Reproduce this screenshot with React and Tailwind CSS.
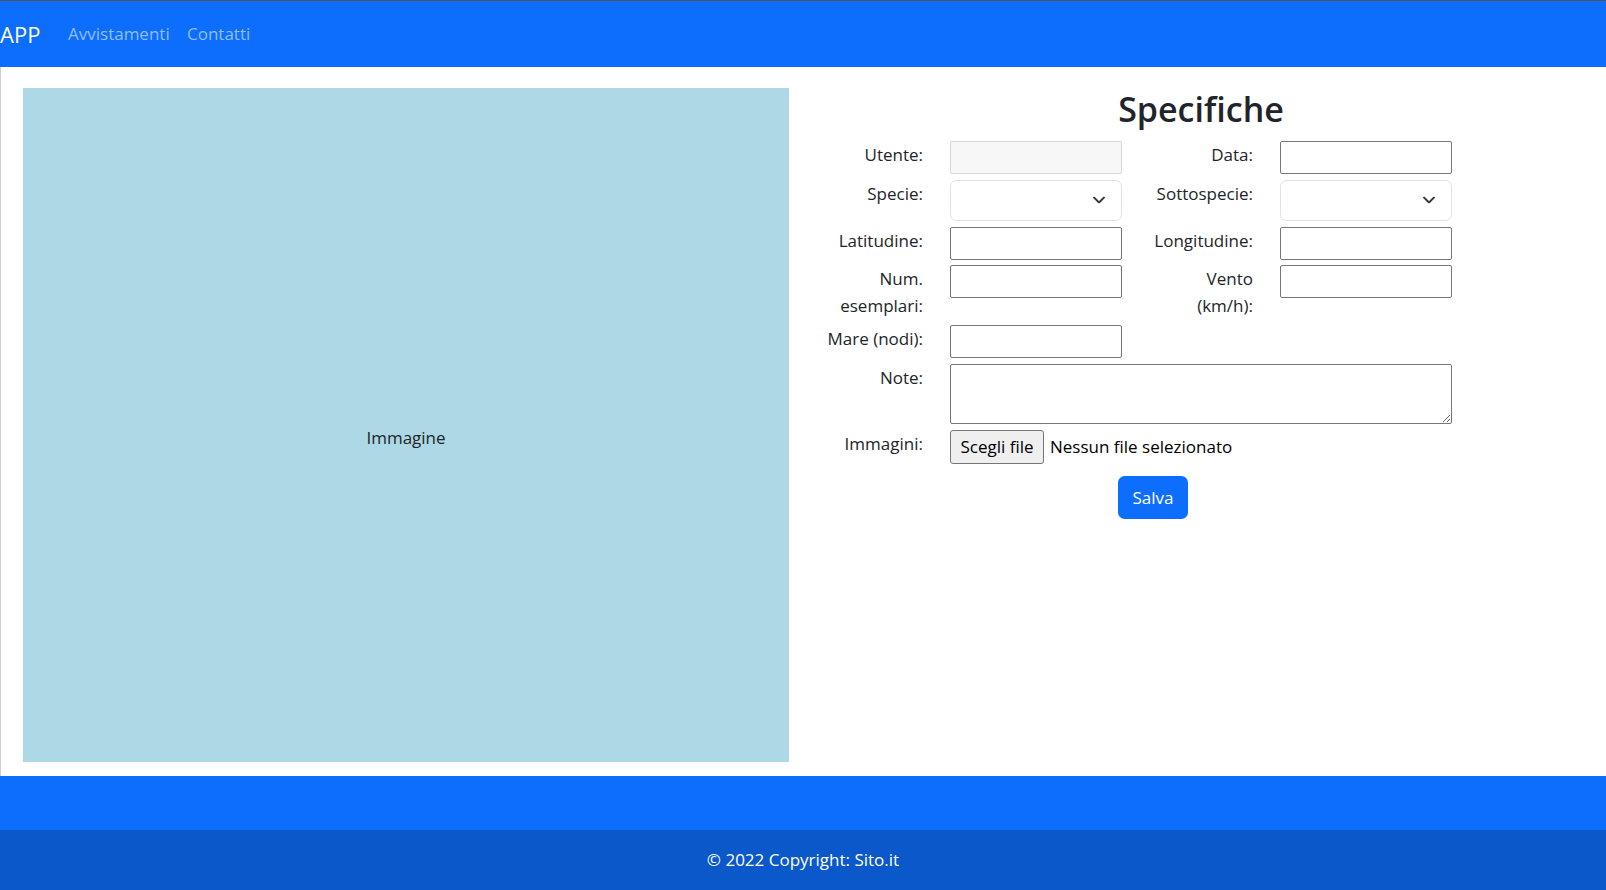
import React from 'react';

const Chevron = () => (
  <svg className="absolute right-[17px] top-1/2 -translate-y-1/2 pointer-events-none" width="12" height="7" viewBox="0 0 12 7" fill="none">
    <path d="M1 1l5 5 5-5" stroke="#343a40" strokeWidth="1.8" strokeLinecap="round" strokeLinejoin="round" />
  </svg>
);

const Label = ({ children }) => (
  <label className="pt-[1px] text-right text-[17px] leading-[26.5px] text-[#212529]">{children}</label>
);

const TextInput = ({ disabled }) => (
  <input
    type="text"
    disabled={disabled}
    className={
      disabled
        ? 'h-[33px] w-full rounded-[2px] border border-[#d6d6d6] bg-[#f7f7f7]'
        : 'h-[33px] w-full rounded-[2px] border border-[#767676] bg-white'
    }
  />
);

const Select = () => (
  <div className="relative h-[41px] w-full">
    <select className="h-full w-full appearance-none rounded-[6.6px] border border-[#dee2e6] bg-white" />
    <Chevron />
  </div>
);

const App = () => {
  return (
    <div className="h-[890px] w-full overflow-hidden bg-white font-['Open_Sans',sans-serif] text-[#212529]">
      {/* navbar */}
      <nav className="flex h-[67px] items-center border-t border-[#525252] bg-[#0d6efd]">
        <a className="w-[68px] text-[22px] text-white">APP</a>
        <a className="w-[119px] text-[17px] text-[#92befe]">Avvistamenti</a>
        <a className="text-[17px] text-[#92befe]">Contatti</a>
      </nav>

      {/* contenuto */}
      <main className="flex h-[709px] border-l border-[#cfcfcf]">
        <div className="pl-[22px] pt-[21px]">
          <div className="flex h-[674px] w-[766px] items-center justify-center bg-[#add8e6] pt-[26px]">
            <span className="text-[17px]">Immagine</span>
          </div>
        </div>

        <div className="ml-[17px] w-[790px] pt-[21px]">
          <h2 className="h-[42px] text-center text-[34px] font-semibold leading-[42px] text-[#212529]">Specifiche</h2>

          <form className="mt-[11px]">
            <div className="grid grid-cols-[117px_172px_104px_172px] gap-x-[27px] gap-y-[5.8px]">
              <Label>Utente:</Label>
              <TextInput disabled />
              <Label>Data:</Label>
              <TextInput />

              <Label>Specie:</Label>
              <Select />
              <Label>Sottospecie:</Label>
              <Select />

              <Label>Latitudine:</Label>
              <TextInput />
              <Label>Longitudine:</Label>
              <TextInput />

              <Label>Num.<br />esemplari:</Label>
              <div><TextInput /></div>
              <Label>Vento<br />(km/h):</Label>
              <div><TextInput /></div>

              <Label>Mare (nodi):</Label>
              <TextInput />
              <div />
              <div />

              <Label>Note:</Label>
              <textarea className="col-span-3 block h-[60px] w-full rounded-[2px] border border-[#767676] bg-white" />

              <Label>Immagini:</Label>
              <div className="col-span-3 flex items-center">
                <button type="button" className="h-[34px] w-[94px] rounded-[3px] border border-[#767676] bg-[#efefef] text-[17px] text-black">
                  Scegli file
                </button>
                <span className="ml-[6px] text-[17px] text-black">Nessun file selezionato</span>
              </div>
            </div>

            <div className="mt-[12px] pl-[312px]">
              <button type="submit" className="h-[43px] w-[70px] rounded-[6.6px] bg-[#0d6efd] text-[17px] text-white">
                Salva
              </button>
            </div>
          </form>
        </div>
      </main>

      {/* footer */}
      <footer>
        <div className="h-[54px] bg-[#0d6efd]" />
        <div className="flex h-[60px] items-center justify-center bg-[#0a58ca] text-[17px] text-white">
          © 2022 Copyright: Sito.it
        </div>
      </footer>
    </div>
  );
};

export default App;
